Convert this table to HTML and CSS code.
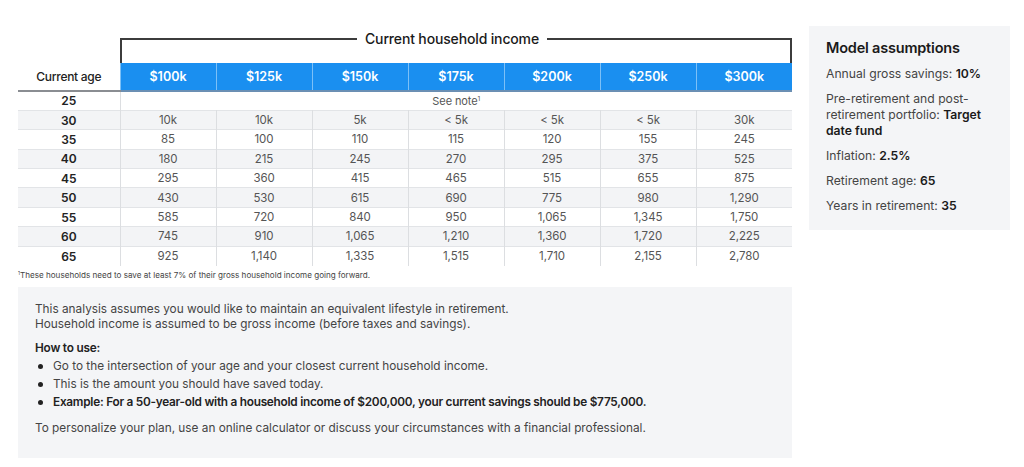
FILE: index.html
```html
<!DOCTYPE html>
<html lang="en">
<head>
<meta charset="utf-8">
<title>Retirement savings table</title>
<link rel="stylesheet" href="styles.css">
</head>
<body>
<div class="page">
  <div class="main">
    <div class="bracket">
      <span class="bracket-title">Current household income</span>
    </div>
    <table class="grid">
      <colgroup>
        <col class="col-age">
        <col span="7" class="col-inc">
      </colgroup>
      <thead>
        <tr>
          <th class="age-head">Current age</th>
          <th class="inc">$100k</th>
          <th class="inc">$125k</th>
          <th class="inc">$150k</th>
          <th class="inc">$175k</th>
          <th class="inc">$200k</th>
          <th class="inc">$250k</th>
          <th class="inc">$300k</th>
        </tr>
      </thead>
      <tbody>
        <tr><th>25</th><td colspan="7" class="note">See note<sup>1</sup></td></tr>
        <tr class="alt"><th>30</th><td>10k</td><td>10k</td><td>5k</td><td>&lt; 5k</td><td>&lt; 5k</td><td>&lt; 5k</td><td>30k</td></tr>
        <tr><th>35</th><td>85</td><td>100</td><td>110</td><td>115</td><td>120</td><td>155</td><td>245</td></tr>
        <tr class="alt"><th>40</th><td>180</td><td>215</td><td>245</td><td>270</td><td>295</td><td>375</td><td>525</td></tr>
        <tr><th>45</th><td>295</td><td>360</td><td>415</td><td>465</td><td>515</td><td>655</td><td>875</td></tr>
        <tr class="alt"><th>50</th><td>430</td><td>530</td><td>615</td><td>690</td><td>775</td><td>980</td><td>1,290</td></tr>
        <tr><th>55</th><td>585</td><td>720</td><td>840</td><td>950</td><td>1,065</td><td>1,345</td><td>1,750</td></tr>
        <tr class="alt"><th>60</th><td>745</td><td>910</td><td>1,065</td><td>1,210</td><td>1,360</td><td>1,720</td><td>2,225</td></tr>
        <tr><th>65</th><td>925</td><td>1,140</td><td>1,335</td><td>1,515</td><td>1,710</td><td>2,155</td><td>2,780</td></tr>
      </tbody>
    </table>
    <p class="footnote"><sup>1</sup>These households need to save at least 7% of their gross household income going forward.</p>
    <div class="notes">
      <p class="intro">This analysis assumes you would like to maintain an equivalent lifestyle in retirement.<br>Household income is assumed to be gross income (before taxes and savings).</p>
      <p class="howto">How to use:</p>
      <ul class="steps">
        <li>Go to the intersection of your age and your closest current household income.</li>
        <li>This is the amount you should have saved today.</li>
        <li class="strong">Example: For a 50-year-old with a household income of $200,000, your current savings should be $775,000.</li>
      </ul>
      <p class="outro">To personalize your plan, use an online calculator or discuss your circumstances with a financial professional.</p>
    </div>
  </div>
  <aside class="assumptions">
    <h2 class="assumptions-title">Model assumptions</h2>
    <p class="item">Annual gross savings: <b>10%</b></p>
    <p class="item">Pre-retirement and post-retirement portfolio: <b>Target date fund</b></p>
    <p class="item">Inflation: <b>2.5%</b></p>
    <p class="item">Retirement age: <b>65</b></p>
    <p class="item">Years in retirement: <b>35</b></p>
  </aside>
</div>
</body>
</html>
```

FILE: styles.css
```css
* { box-sizing: border-box; }

html, body {
  margin: 0;
  padding: 0;
  background: #ffffff;
}

body {
  font-family: "Inter", "Liberation Sans", sans-serif;
  color: #222;
  width: 1024px;
  height: 467px;
  overflow: hidden;
}

.page {
  display: flex;
  align-items: flex-start;
  gap: 17px;
  padding: 26px 0 0 18px;
}

.main {
  width: 774px;
  display: flex;
  flex-direction: column;
}

.bracket {
  margin: 12px 0 0 102px;
  width: 672px;
  height: 25px;
  border: 2px solid #3c3c3c;
  border-bottom: none;
  display: flex;
  justify-content: center;
}

.bracket-title {
  background: #fff;
  padding: 0 8px;
  margin-top: -10px;
  margin-right: 8px;
  height: 18px;
  font-size: 14px;
  font-weight: 500;
  color: #1a1a1a;
  letter-spacing: -0.15px;
  line-height: 18px;
}

.grid {
  width: 774px;
  table-layout: fixed;
  border-collapse: collapse;
}

.col-age { width: 102px; }
.col-inc { width: 96px; }

.grid thead th {
  height: 28px;
  padding: 0;
  border-bottom: 2px solid #8a8d92;
  font-size: 12px;
  text-align: center;
  vertical-align: middle;
}

.grid th.age-head {
  font-weight: 500;
  color: #222;
  font-size: 12px;
  letter-spacing: -0.3px;
}

.grid th.inc {
  background: #1a8ff0;
  color: #fff;
  font-weight: 600;
  font-size: 12.5px;
  border-left: 1px solid #7cc0f7;
  border-bottom-color: #6b8fb3;
}

.grid th.inc:first-of-type { border-left: none; }

.grid tbody tr {
  height: 19.4px;
  border-bottom: 1px solid #e2e4e7;
}

.grid tbody tr:last-child { border-bottom: none; }

.grid tbody tr.alt { background: #f3f4f6; }

.grid tbody th {
  padding: 0;
  font-size: 12px;
  font-weight: 600;
  color: #222;
  text-align: center;
  border-right: 1px solid #dcdee1;
}

.grid tbody td {
  padding: 0;
  font-size: 11.5px;
  color: #555;
  text-align: center;
  border-left: 1px solid #dcdee1;
  letter-spacing: -0.1px;
}

.grid tbody td.note {
  font-size: 11px;
  color: #555;
}

sup {
  font-size: 0.6em;
  line-height: 0;
  vertical-align: 0.55em;
}

.footnote {
  margin: 3px 0 0 0;
  font-size: 8.1px;
  letter-spacing: 0;
  color: #444;
  line-height: 12px;
}

.notes {
  margin-top: 6px;
  background: #f4f5f7;
  height: 171px;
  padding: 15px 17px 0 17px;
  font-size: 11.8px;
  color: #444;
  letter-spacing: 0;
}

.notes p { margin: 0; }

.intro { line-height: 15px; }

.howto {
  margin-top: 9px !important;
  font-weight: 600;
  color: #222;
  line-height: 15px;
  letter-spacing: -0.2px;
}

.steps {
  margin: 1px 0 0 0;
  padding: 0;
  list-style: none;
}

.steps li {
  position: relative;
  padding-left: 18px;
  line-height: 18px;
}

.steps li::before {
  content: "";
  position: absolute;
  left: 3px;
  top: 7px;
  width: 5px;
  height: 5px;
  border-radius: 50%;
  background: #222;
}

.steps li.strong {
  font-weight: 600;
  color: #222;
  letter-spacing: -0.25px;
}

.outro {
  margin-top: 10px !important;
  line-height: 15px;
}

.assumptions {
  width: 201px;
  height: 204px;
  background: #f4f5f7;
  padding: 13px 17px 0 17px;
}

.assumptions-title {
  margin: 0 0 9px 0;
  font-size: 14.5px;
  font-weight: 600;
  color: #1a1a1a;
  letter-spacing: -0.2px;
  line-height: 18px;
}

.assumptions .item {
  margin: 0 0 9px 0;
  font-size: 12.2px;
  line-height: 16px;
  color: #444;
  letter-spacing: 0;
}

.assumptions .item b {
  font-weight: 600;
  color: #1a1a1a;
}
```
